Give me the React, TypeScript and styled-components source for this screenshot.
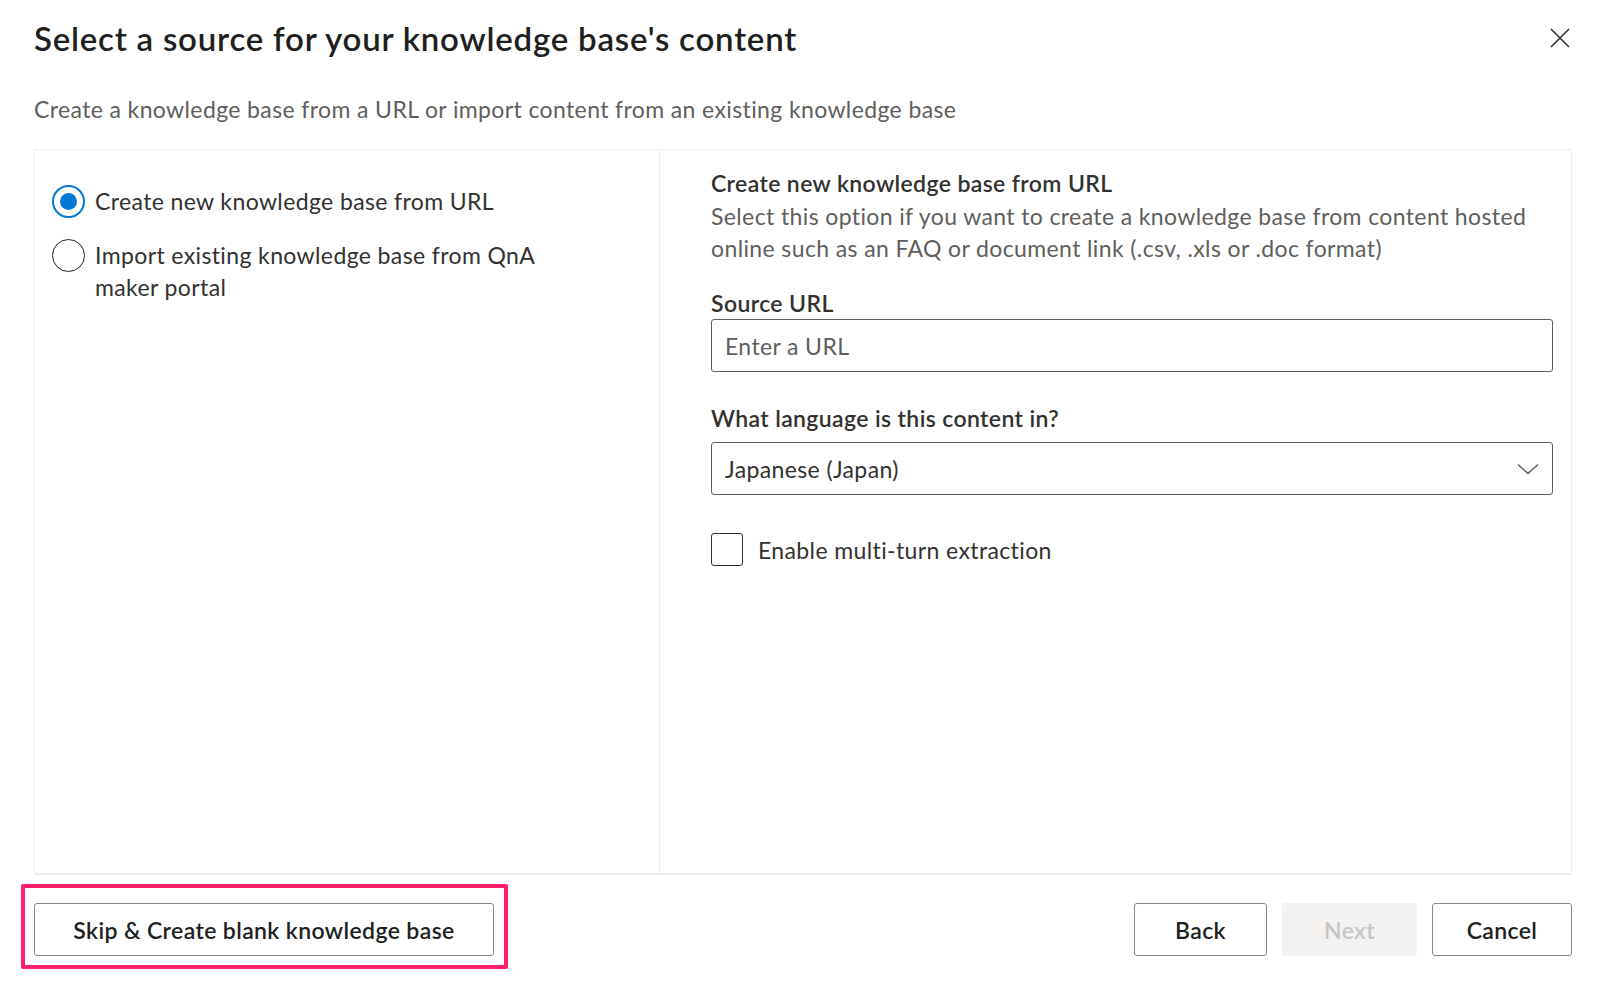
import React from "react";
import styled, { createGlobalStyle } from "styled-components";

const GlobalStyle = createGlobalStyle`
  html, body {
    margin: 0;
    padding: 0;
    background: #ffffff;
  }
  body {
    font-family: Lato, "Open Sans", "Liberation Sans", sans-serif;
    letter-spacing: 0.38px;
    color: #323130;
  }
  * {
    box-sizing: border-box;
  }
`;

const Dialog = styled.div`
  width: 1600px;
  height: 982px;
  padding: 16px 28px 0 34px;
  display: flex;
  flex-direction: column;
  background: #fff;
`;

const Header = styled.div`
  display: flex;
  align-items: flex-start;
  justify-content: space-between;
`;

const Title = styled.h1`
  margin: 0;
  font-size: 33px;
  line-height: 44px;
  font-weight: 600;
  letter-spacing: 0.78px;
  color: #201f1e;
`;

const CloseButton = styled.button`
  margin: 12px 2px 0 0;
  width: 20px;
  height: 20px;
  padding: 0;
  border: none;
  background: transparent;
  display: flex;
  cursor: pointer;
`;

const Subtitle = styled.p`
  margin: 33px 0 24px;
  font-size: 23px;
  line-height: 32px;
  color: #605e5c;
`;

const Panel = styled.div`
  height: 726px;
  display: grid;
  grid-template-columns: 625px 1fr;
  border: 1px solid #efeeed;
  border-bottom-width: 2px;
`;

const LeftCol = styled.div`
  border-right: 1px solid #efeeed;
  padding: 35px 0 0 17px;
  display: flex;
  flex-direction: column;
  gap: 21px;
`;

const RightCol = styled.div`
  padding: 17px 18px 0 51px;
  display: flex;
  flex-direction: column;
`;

const Choice = styled.label`
  display: flex;
  align-items: flex-start;
  gap: 10px;
  font-size: 23px;
  line-height: 32px;
  color: #323130;
  cursor: pointer;
`;

const ChoiceText = styled.span`
  max-width: 450px;
`;

const RadioCircle = styled.span<{ $checked?: boolean }>`
  flex: none;
  width: 33px;
  height: 33px;
  border-radius: 50%;
  border: ${(p) => (p.$checked ? "2px solid #0078d4" : "1.6px solid #201f1e")};
  display: flex;
  align-items: center;
  justify-content: center;
  &::after {
    content: "";
    width: 17px;
    height: 17px;
    border-radius: 50%;
    background: ${(p) => (p.$checked ? "#0078d4" : "transparent")};
  }
`;

const SectionTitle = styled.div`
  font-size: 23px;
  line-height: 33px;
  font-weight: 600;
  color: #323130;
`;

const Description = styled.p`
  margin: 0;
  font-size: 23px;
  line-height: 32px;
  color: #605e5c;
  max-width: 830px;
`;

const FieldLabel = styled.div<{ $top: number; $gap: number }>`
  margin-top: ${(p) => p.$top}px;
  margin-bottom: ${(p) => p.$gap}px;
  font-size: 23px;
  line-height: 32px;
  font-weight: 600;
  color: #323130;
`;

const TextField = styled.div`
  height: 53px;
  border: 1px solid #605e5c;
  border-radius: 3px;
  padding: 0 13px;
  display: flex;
  align-items: center;
  font-size: 23px;
  color: #605e5c;
`;

const Dropdown = styled(TextField)`
  justify-content: space-between;
  color: #323130;
  padding-right: 13px;
`;

const CheckRow = styled.label`
  margin-top: 38px;
  display: flex;
  align-items: center;
  gap: 15px;
  font-size: 23px;
  line-height: 32px;
  color: #323130;
`;

const CheckBox = styled.span`
  width: 32px;
  height: 33px;
  border: 1.5px solid #323130;
  border-radius: 3px;
`;

const Footer = styled.div`
  margin: 9px 0 0 -13px;
  display: flex;
  align-items: flex-start;
  justify-content: space-between;
`;

const Highlight = styled.div`
  border: 4px solid #ff1f68;
  border-radius: 2px;
  padding: 15px 10px 9px 9px;
`;

const ButtonGroup = styled.div`
  margin-top: 19px;
  display: flex;
  gap: 15px;
`;

const Button = styled.button<{ $width: number }>`
  width: ${(p) => p.$width}px;
  height: 53px;
  padding: 0;
  border: 1px solid #8a8886;
  border-radius: 3px;
  background: #fff;
  font-family: inherit;
  font-size: 23px;
  font-weight: 600;
  letter-spacing: 0.38px;
  color: #201f1e;
  cursor: pointer;
  &:disabled {
    background: #f3f2f1;
    border-color: #f3f2f1;
    color: #c8c6c4;
    cursor: default;
  }
`;

const CloseIcon = () => (
  <svg width="20" height="20" viewBox="0 0 20 20">
    <path d="M1 1 L19 19 M19 1 L1 19" stroke="#323130" strokeWidth="1.6" />
  </svg>
);

const ChevronIcon = () => (
  <svg width="22" height="12" viewBox="0 0 22 12">
    <path d="M1 1.5 L11 10.5 L21 1.5" fill="none" stroke="#605e5c" strokeWidth="1.5" />
  </svg>
);

export default function App() {
  return (
    <>
      <GlobalStyle />
      <Dialog>
        <Header>
          <Title>Select a source for your knowledge base's content</Title>
          <CloseButton aria-label="Close">
            <CloseIcon />
          </CloseButton>
        </Header>
        <Subtitle>
          Create a knowledge base from a URL or import content from an existing knowledge base
        </Subtitle>
        <Panel>
          <LeftCol>
            <Choice>
              <RadioCircle $checked />
              <ChoiceText>Create new knowledge base from URL</ChoiceText>
            </Choice>
            <Choice>
              <RadioCircle />
              <ChoiceText>Import existing knowledge base from QnA maker portal</ChoiceText>
            </Choice>
          </LeftCol>
          <RightCol>
            <SectionTitle>Create new knowledge base from URL</SectionTitle>
            <Description>
              Select this option if you want to create a knowledge base from content hosted
              online such as an FAQ or document link (.csv, .xls or .doc format)
            </Description>
            <FieldLabel $top={23} $gap={0}>Source URL</FieldLabel>
            <TextField>Enter a URL</TextField>
            <FieldLabel $top={30} $gap={8}>What language is this content in?</FieldLabel>
            <Dropdown>
              <span>Japanese (Japan)</span>
              <ChevronIcon />
            </Dropdown>
            <CheckRow>
              <CheckBox />
              Enable multi-turn extraction
            </CheckRow>
          </RightCol>
        </Panel>
        <Footer>
          <Highlight>
            <Button $width={460}>Skip &amp; Create blank knowledge base</Button>
          </Highlight>
          <ButtonGroup>
            <Button $width={133}>Back</Button>
            <Button $width={135} disabled>
              Next
            </Button>
            <Button $width={140}>Cancel</Button>
          </ButtonGroup>
        </Footer>
      </Dialog>
    </>
  );
}
